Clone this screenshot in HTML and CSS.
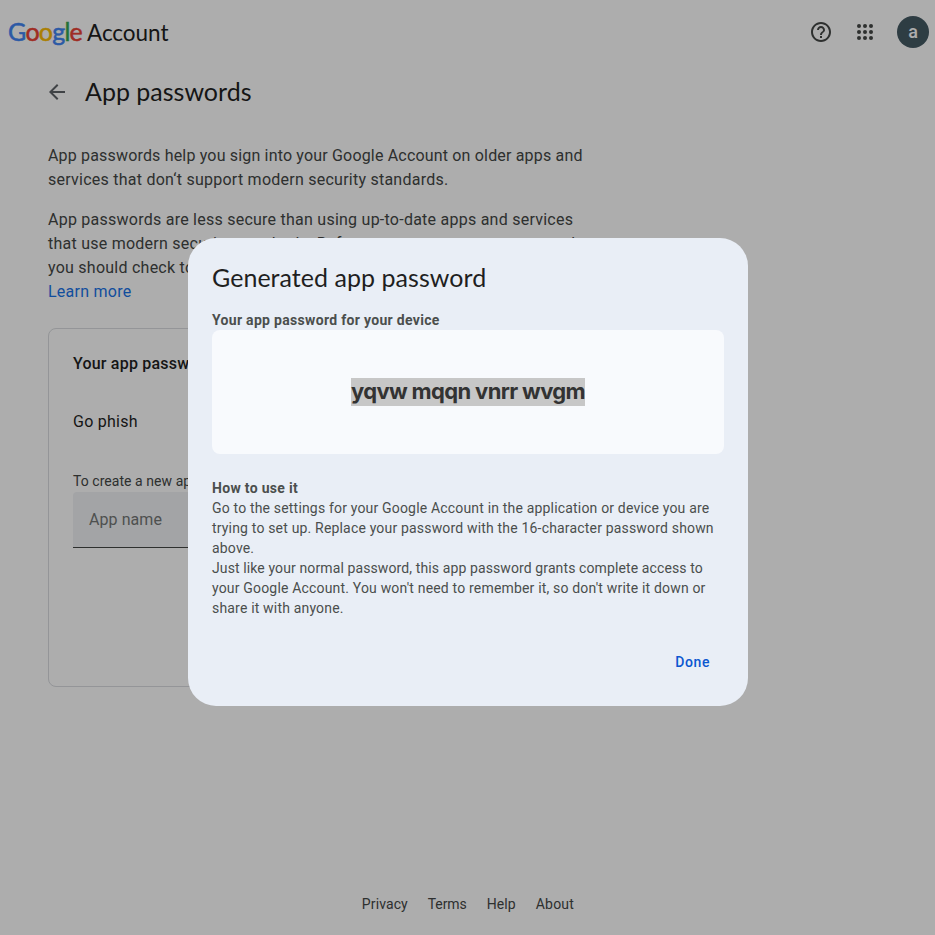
FILE: index.html
```
<!DOCTYPE html>
<html lang="en">
<head>
<meta charset="utf-8">
<title>App passwords</title>
<link rel="stylesheet" href="styles.css">
</head>
<body>
<div class="page">
  <header class="topbar">
    <div class="brand"><span class="logo"><span class="blue">G</span><span class="red">o</span><span class="yellow">o</span><span class="blue">g</span><span class="green">l</span><span class="red">e</span></span><span class="product">Account</span></div>
    <div class="actions">
      <svg class="icon" viewBox="0 0 24 24"><path d="M11 18h2v-2h-2v2zm1-16C6.48 2 2 6.48 2 12s4.480 10 10 10 10-4.480 10-10S17.520 2 12 2zm0 18c-4.410 0-8-3.590-8-8s3.590-8 8-8 8 3.590 8 8-3.590 8-8 8zm0-14c-2.210 0-4 1.790-4 4h2c0-1.100.9-2 2-2s2 .9 2 2c0 2-3 1.750-3 5h2c0-2.250 3-2.500 3-5 0-2.210-1.790-4-4-4z"/></svg>
      <svg class="icon" viewBox="0 0 24 24"><circle cx="6" cy="6" r="2"/><circle cx="12" cy="6" r="2"/><circle cx="18" cy="6" r="2"/><circle cx="6" cy="12" r="2"/><circle cx="12" cy="12" r="2"/><circle cx="18" cy="12" r="2"/><circle cx="6" cy="18" r="2"/><circle cx="12" cy="18" r="2"/><circle cx="18" cy="18" r="2"/></svg>
      <div class="avatar">a</div>
    </div>
  </header>
  <main class="main">
    <div class="title-row">
      <svg class="back" viewBox="0 0 24 24"><path d="M20 11H7.830l5.590-5.590L12 4l-8 8 8 8 1.410-1.410L7.830 13H20v-2z"/></svg>
      <h1>App passwords</h1>
    </div>
    <p class="intro">App passwords help you sign into your Google Account on older apps and<br><span class="l2">services that don‘t support modern security standards.</span></p>
    <p class="intro l2">App passwords are less secure than using up-to-date apps and services<br>that use modern security standards. Before you create an app password,<br>you should check to<br><a>Learn more</a></p>
    <section class="card">
      <h2>Your app passwords</h2>
      <div class="entry">Go phish</div>
      <div class="hint">To create a new app</div>
      <div class="field">App name</div>
    </section>
  </main>
  <footer class="footer"><a class="privacy">Privacy</a><a class="terms">Terms</a><a class="help">Help</a><a class="about">About</a></footer>
</div>
<div class="scrim">
  <div class="dialog" role="dialog">
    <h2 class="dialog-title">Generated app password</h2>
    <div class="strong">Your app password for your device</div>
    <div class="code-box"><span class="code">yqvw mqqn vnrr wvgm</span></div>
    <div class="strong">How to use it</div>
    <div class="copy">Go to the settings for your Google Account in the application or device you are<br>trying to set up. Replace your password with the 16-character password shown<br>above.</div>
    <div class="copy"><span class="tight">Just like your normal password, this app password grants complete access to</span><br>your Google Account. You won't need to remember it, so don't write it down or<br>share it with anyone.</div>
    <div class="dialog-actions"><span class="done">Done</span></div>
  </div>
</div>
</body>
</html>
```
FILE: styles.css
```
* { box-sizing: border-box; }
body {
  margin: 0;
  height: 935px;
  overflow: hidden;
  font-family: Roboto, "Liberation Sans", sans-serif;
  color: #1f1f1f;
  background: #fff;
}
h1, h2, p { margin: 0; font-weight: 400; }
.page { height: 935px; display: flex; flex-direction: column; }
.topbar {
  height: 64px;
  padding: 0 6px 0 8px;
  display: flex;
  align-items: center;
  justify-content: space-between;
}
.brand { display: flex; align-items: baseline; line-height: 32px; padding-bottom: 1px; }
.logo { font-family: Lato, sans-serif; font-size: 25px; width: 79px; letter-spacing: -0.75px; -webkit-text-stroke: 0.5px; }
.blue { color: #4285f4; }
.red { color: #ea4335; }
.yellow { color: #fbbc05; }
.green { color: #34a853; }
.product { font-family: Lato, sans-serif; font-size: 22.5px; letter-spacing: -0.05px; }
.actions { display: flex; align-items: center; gap: 20px; }
.icon { width: 24px; height: 24px; fill: #444746; }
.avatar {
  width: 32px;
  height: 32px;
  border-radius: 50%;
  background: #455a64;
  color: #fff;
  font-size: 18px;
  font-weight: 500;
  line-height: 31px;
  text-align: center;
}
.main { flex: 1; padding: 12px 48px 0; }
.title-row { display: flex; align-items: center; height: 32px; margin: 0 0 36px -3px; }
.back { width: 24px; height: 24px; fill: #5f6368; margin-right: 16px; }
.title-row h1 { font-family: Lato, sans-serif; font-size: 25px; line-height: 30px; padding-bottom: 2px; letter-spacing: 0; }
.intro { font-size: 16px; line-height: 24px; letter-spacing: 0.175px; color: #444746; margin-bottom: 16px; }
.l2 { letter-spacing: 0.245px; }
.intro a { color: #1a73e8; }
.intro + .card { margin-top: 24px; }
.card {
  width: 640px;
  height: 359px;
  padding: 23px 24px 24px;
  border: 1px solid #dadce0;
  border-radius: 8px;
}
.card h2 { font-size: 16px; font-weight: 500; line-height: 24px; letter-spacing: 0.2px; height: 58px; }
.entry { font-size: 16px; line-height: 24px; letter-spacing: 0.25px; height: 61px; }
.hint { font-size: 14px; line-height: 20px; height: 21px; color: #444746; letter-spacing: 0.05px; }
.field {
  height: 56px;
  padding: 0 16px;
  border-bottom: 1px solid #444746;
  border-radius: 4px 4px 0 0;
  background: #f0f2f5;
  color: #747775;
  font-size: 16px;
  line-height: 56px;
  letter-spacing: 0.07px;
}
.footer { height: 63px; display: flex; justify-content: center; gap: 20px; padding-left: 1px; font-size: 14px; line-height: 64px; color: #444746; }
.privacy { letter-spacing: 0.1px; }
.terms { letter-spacing: -0.1px; }
.help { letter-spacing: 0.08px; }
.about { letter-spacing: 0.24px; }
.scrim {
  position: absolute;
  inset: 0;
  display: flex;
  justify-content: center;
  align-items: flex-start;
  padding: 238px 0 0 1px;
  background: rgba(0, 0, 0, 0.32);
}
.dialog {
  width: 560px;
  height: 468px;
  padding: 24px;
  border-radius: 28px;
  background: #e9eef6;
  font-size: 14px;
  line-height: 20px;
  color: #4b4e4d;
}
.dialog-title { font-family: Lato, sans-serif; font-size: 25px; line-height: 30px; padding-bottom: 2px; letter-spacing: 0.04px; color: #1f1f1f; margin-bottom: 16px; }
.strong { font-weight: 700; letter-spacing: 0.31px; }
.code-box {
  height: 124px;
  margin-bottom: 24px;
  border-radius: 8px;
  background: #f8fafd;
  display: flex;
  align-items: center;
  justify-content: center;
}
.code { height: 28px; line-height: 27px; font-family: Inter, sans-serif; font-size: 22px; font-weight: 700; letter-spacing: -0.62px; word-spacing: -0.1px; background: #c7c7c7; color: #333; }
.copy { letter-spacing: 0.178px; }
.tight { letter-spacing: 0.11px; }
.dialog-actions { display: flex; justify-content: flex-end; padding: 34px 14px 0 0; }
.done { font-weight: 500; letter-spacing: 0.6px; color: #0b57d0; }
```
